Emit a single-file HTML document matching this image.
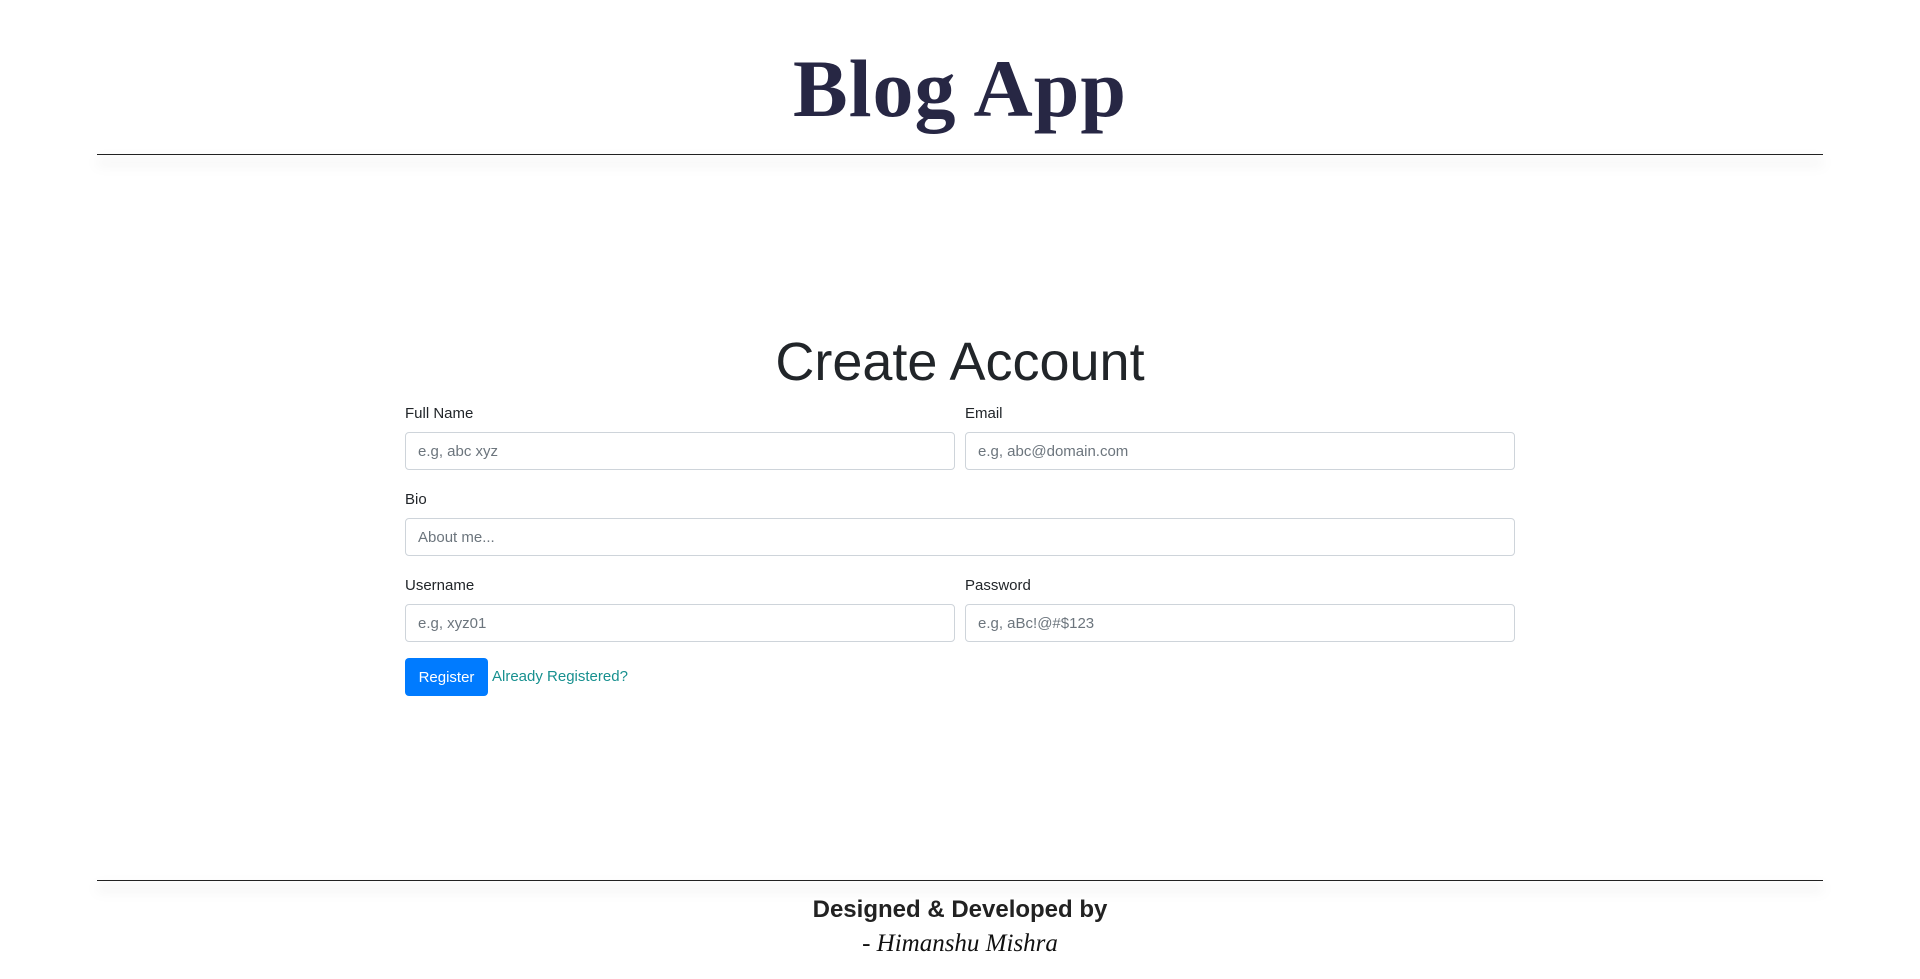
<!DOCTYPE html>
<html><head><meta charset="utf-8"><style>
*{box-sizing:border-box;margin:0;padding:0}
body{width:1920px;height:979px;background:#fff;font-family:"Liberation Sans",sans-serif;color:#212529;position:relative;overflow:hidden}
.title{position:absolute;left:0;width:1920px;top:34px;text-align:center;font-family:"Liberation Serif",serif;font-weight:bold;font-size:82px;color:#272744;letter-spacing:1px;line-height:110px}
.hr{position:absolute;left:97px;width:1726px;height:1px;background:#222;box-shadow:0 8px 12px rgba(0,0,0,.35)}
h1{position:absolute;left:0;width:1920px;text-align:center;top:332px;font-size:54px;font-weight:normal;line-height:60px;color:#212529}
.lbl{position:absolute;font-size:15px;line-height:20px}
.in{position:absolute;height:38px;border:1px solid #ced4da;border-radius:4px;font-size:15px;color:#6c757d;padding:0 12px;line-height:38px}
.btn{position:absolute;left:405px;top:658px;width:83px;height:38px;background:#007bff;color:#fff;border-radius:4px;font-size:15px;text-align:center;line-height:40px}
.link{position:absolute;left:492px;top:668px;color:#17908f;font-size:15px}
.f1{position:absolute;top:896px;width:1920px;text-align:center;font-weight:bold;font-size:24px;color:#222}
.f2{position:absolute;top:930px;width:1920px;text-align:center;font-style:italic;font-size:25px;font-family:"Liberation Serif",serif;color:#111}
</style></head><body>
<div class="title">Blog App</div>
<div class="hr" style="top:154px"></div>
<h1>Create Account</h1>
<div class="lbl" style="left:405px;top:404px">Full Name</div>
<div class="lbl" style="left:965px;top:404px">Email</div>
<div class="in" style="left:405px;top:432px;width:550px">e.g, abc xyz</div>
<div class="in" style="left:965px;top:432px;width:550px">e.g, abc@domain.com</div>
<div class="lbl" style="left:405px;top:490px">Bio</div>
<div class="in" style="left:405px;top:518px;width:1110px">About me...</div>
<div class="lbl" style="left:405px;top:576px">Username</div>
<div class="lbl" style="left:965px;top:576px">Password</div>
<div class="in" style="left:405px;top:604px;width:550px">e.g, xyz01</div>
<div class="in" style="left:965px;top:604px;width:550px">e.g, aBc!@#$123</div>
<div class="btn">Register</div>
<div class="link">Already Registered?</div>
<div class="hr" style="top:880px"></div>
<div class="f1">Designed &amp; Developed by</div>
<div class="f2">- Himanshu Mishra</div>
</body></html>
